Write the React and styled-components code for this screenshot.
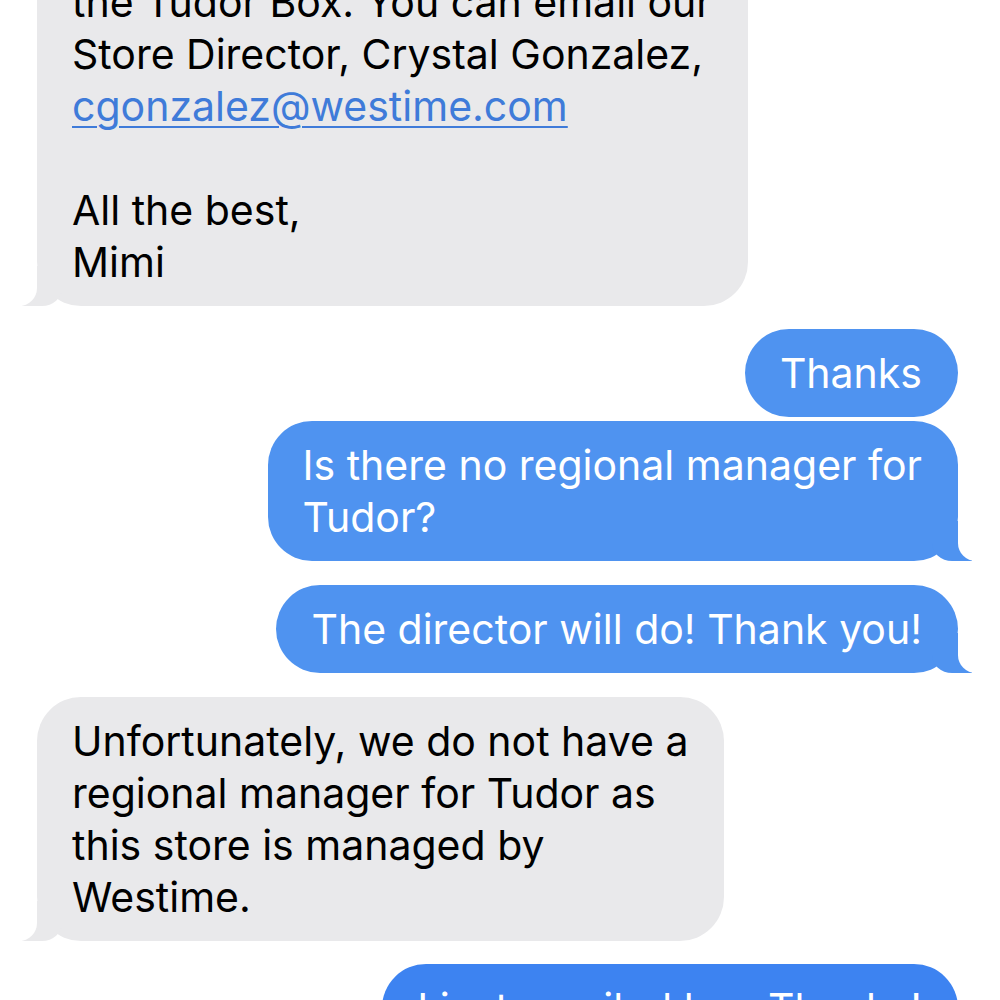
import React from "react";
import styled, { createGlobalStyle, css } from "styled-components";

const Global = createGlobalStyle`
  html, body {
    margin: 0;
    padding: 0;
    background: #ffffff;
    overflow: hidden;
  }
  body {
    font-family: "Inter", "Liberation Sans", Arial, sans-serif;
    -webkit-font-smoothing: antialiased;
  }
`;

const Screen = styled.div`
  width: 1000px;
  height: 1000px;
  overflow: hidden;
  background: #ffffff;
`;

const Thread = styled.div`
  display: flex;
  flex-direction: column;
  padding: 0 42px 0 37px;
  margin-top: -42px;
`;

const Bubble = styled.div`
  position: relative;
  box-sizing: border-box;
  width: fit-content;
  max-width: 740px;
  padding: 18px 36px 18px 35px;
  border-radius: 44px;
  font-size: 41px;
  line-height: 52px;
  letter-spacing: 0;
  white-space: pre-line;
  margin-top: ${(p) => p.$gap ?? 23}px;

  ${(p) =>
    p.$sent
      ? css`
          align-self: flex-end;
          background: ${p.$tone || "#4f93f0"};
          color: #ffffff;
        `
      : css`
          align-self: flex-start;
          background: #e9e9eb;
          color: #000000;
        `}

  ${(p) =>
    p.$tail &&
    p.$sent &&
    css`
      &::before {
        content: "";
        position: absolute;
        bottom: 0;
        right: -14px;
        height: 40px;
        border-right: 40px solid ${p.$tone || "#4f93f0"};
        border-bottom-left-radius: 20px 18px;
      }
      &::after {
        content: "";
        position: absolute;
        bottom: 0;
        right: -26px;
        width: 26px;
        height: 40px;
        background: #ffffff;
        border-bottom-left-radius: 18px;
      }
    `}

  ${(p) =>
    p.$tail &&
    !p.$sent &&
    css`
      &::before {
        content: "";
        position: absolute;
        bottom: 0;
        left: -15px;
        height: 40px;
        border-left: 40px solid #e9e9eb;
        border-bottom-right-radius: 20px 18px;
      }
      &::after {
        content: "";
        position: absolute;
        bottom: 0;
        left: -26px;
        width: 26px;
        height: 40px;
        background: #ffffff;
        border-bottom-right-radius: 18px;
      }
    `}
`;

const MailLink = styled.a`
  color: #3f7bd9;
  text-decoration: underline;
  text-decoration-thickness: 2px;
  text-underline-offset: 5px;
`;

export default function App() {
  return (
    <Screen>
      <Global />
      <Thread>
        <Bubble $tail $gap={0}>
          {"the Tudor Box. You can email our\nStore Director, Crystal Gonzalez,\n"}
          <MailLink href="mailto:cgonzalez@westime.com">cgonzalez@westime.com</MailLink>
          {"\n\nAll the best,\nMimi"}
        </Bubble>
        <Bubble $sent>Thanks</Bubble>
        <Bubble $sent $gap={4} $tail>
          {"Is there no regional manager for\nTudor?"}
        </Bubble>
        <Bubble $sent $tail $gap={24}>
          The director will do! Thank you!
        </Bubble>
        <Bubble $tail $gap={24}>
          {"Unfortunately, we do not have a\nregional manager for Tudor as\nthis store is managed by\nWestime."}
        </Bubble>
        <Bubble $sent $tone="#3d83f1">
          I just emailed her. Thanks!
        </Bubble>
      </Thread>
    </Screen>
  );
}
